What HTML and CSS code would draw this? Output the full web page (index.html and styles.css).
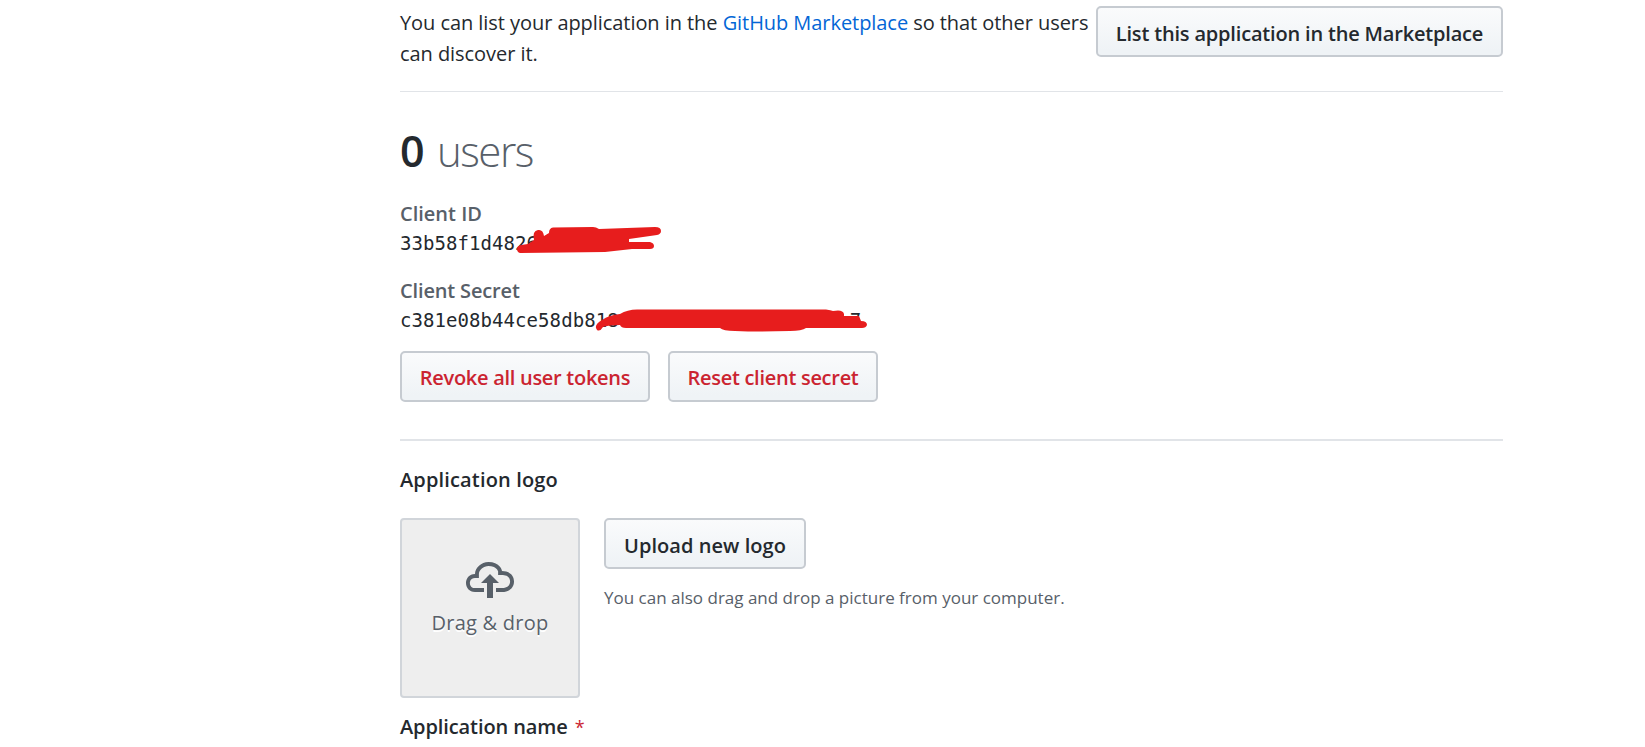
FILE: index.html
```html
<!DOCTYPE html>
<html lang="en">
<head>
<meta charset="utf-8">
<title>Application settings</title>
<link rel="stylesheet" href="styles.css">
</head>
<body>
<main class="settings">
  <section class="marketplace">
    <p class="marketplace-text"><span>You can list your application in the <a class="link" href="#">GitHub Marketplace</a> so that other users</span><br><span>can discover it.</span></p>
    <button class="btn btn-list">List this application in the Marketplace</button>
  </section>
  <section class="keys">
    <h2 class="users"><strong class="users-count">0</strong><span class="users-label">users</span></h2>
    <dl class="key-list">
      <dt class="key-label label-id">Client ID</dt>
      <dd class="key-value">33b58f1d4826
        <svg class="scribble scribble-id" width="150" height="32" viewBox="515 224 150 32"><path d="M517 249Q517 246 521 245L528 244L534 240Q532 231 538 230Q543 229 544 236L549 233Q549 228 553 227.500L593 227Q596 227 599 229L655 227Q661 227 661 231Q661 234 657 235L629 239L629 242L650 242Q654 243 654 246Q654 249 650 249L632 249L605 252L520 253Q517 252 517 249Z"/></svg>
      </dd>
      <dt class="key-label label-secret">Client Secret</dt>
      <dd class="key-value">c381e08b44ce58db818<span class="key-tail">7</span>
        <svg class="scribble scribble-secret" width="276" height="28" viewBox="593 306 276 28"><path d="M596 328Q595 324 602 320Q609 315 620 314Q628 309 639 309.500L826 309.500Q831 310 833 311Q843 309 844 314L844 316L859 316L861 321Q867 321 867 325Q866 328 862 328L806 328Q802 331 790 331Q760 332 735 331Q723 331 720 328L626 328Q621 328 620 325Q608 325 603 327Q600 332 597 330Z"/></svg>
      </dd>
    </dl>
    <div class="actions">
      <button class="btn btn-danger btn-revoke">Revoke all user tokens</button>
      <button class="btn btn-danger btn-reset">Reset client secret</button>
    </div>
  </section>
  <section class="logo">
    <h3 class="field-title title-logo">Application logo</h3>
    <div class="logo-row">
      <div class="dropzone">
        <svg class="cloud" width="48" height="36" viewBox="0 2 16 12"><path d="M7 9H5l3-3 3 3H9v5H7V9zm5-4c0-.44-.91-3-4.5-3C5.080 2 3 3.920 3 6 1.020 6 0 7.520 0 9c0 1.530 1 3 3 3h3v-1.300H3c-1.620 0-1.700-1.420-1.700-1.700 0-.17.050-1.700 1.700-1.700h1.300V6c0-1.390 1.560-2.700 3.200-2.700 2.550 0 3.130 1.550 3.200 1.800v1.200H12c.81 0 2.700.22 2.700 2.200 0 2.090-2.250 2.200-2.700 2.200h-2V12h2c2.080 0 4-1.160 4-3.500C16 6.060 14.080 5 12 5z"/></svg>
        <span class="drop-text">Drag &amp; drop</span>
      </div>
      <div class="upload">
        <button class="btn btn-upload">Upload new logo</button>
        <p class="note">You can also drag and drop a picture from your computer.</p>
      </div>
    </div>
    <h3 class="field-title title-name">Application name<span class="required">*</span></h3>
  </section>
</main>
</body>
</html>
```
FILE: styles.css
```css
* { box-sizing: border-box; }
body {
  margin: 0;
  background: #fff;
  color: #24292e;
  font: 20px/31px "Open Sans", "Noto Sans", sans-serif;
  overflow: hidden;
}
h2, h3, p, dl, dd { margin: 0; }
.settings { width: 1103px; margin-left: 400px; }
.marketplace {
  display: flex;
  justify-content: space-between;
  align-items: flex-start;
  height: 92px;
  padding-top: 6px;
  border-bottom: 1px solid #e1e4e8;
}
.marketplace-text { white-space: nowrap; padding-top: 1px; letter-spacing: -0.06px; }
.link { color: #0366d6; text-decoration: none; }
.btn {
  height: 51px;
  padding: 4px 0 0;
  border: 2px solid #c6cbd1;
  border-radius: 5px;
  background: linear-gradient(#fafbfc, #eff3f6 90%);
  color: #24292e;
  font: 600 20px/30px "Open Sans", "Noto Sans", sans-serif;
  letter-spacing: -0.18px;
  white-space: nowrap;
}
.btn-list { width: 407px; }
.btn-danger { padding-top: 3px; color: #cb2431; }
.btn-revoke { width: 250px; letter-spacing: -0.28px; }
.btn-reset { width: 210px; letter-spacing: -0.28px; }
.btn-upload { width: 202px; letter-spacing: 0.05px; }
.keys { height: 349px; padding-top: 27px; border-bottom: 2px solid #e1e4e8; }
.users { display: flex; height: 64px; font-size: 43px; line-height: 64px; font-weight: 300; }
.users-count { width: 37px; font-weight: 600; }
.users-label { color: #586069; font-size: 42px; letter-spacing: -1.5px; }
.key-list { padding-top: 15px; }
.key-label { height: 31px; color: #586069; font-weight: 600; }
.label-secret { letter-spacing: -0.15px; }
.key-value {
  position: relative;
  height: 46px;
  font: 19px/29px "DejaVu Sans Mono", monospace;
  letter-spacing: 0.07px;
  white-space: nowrap;
}
.key-tail { padding-left: 231px; }
.scribble { position: absolute; fill: #e71d1d; }
.scribble-id { left: 115px; top: -5px; }
.scribble-secret { left: 193px; top: 0; }
.actions { display: flex; gap: 18px; margin-top: -1px; }
.logo { padding-top: 23px; }
.field-title { font-size: 20px; font-weight: 600; line-height: 31px; letter-spacing: 0.15px; }
.logo-row { display: flex; gap: 24px; padding-top: 23px; }
.dropzone {
  display: flex;
  flex-direction: column;
  align-items: center;
  width: 180px;
  height: 180px;
  padding-top: 42px;
  border: 2px solid #d1d5da;
  border-radius: 4px;
  background: #eee;
  color: #586069;
  text-shadow: 0 2px 0 #fff;
}
.cloud { fill: #586069; }
.drop-text { margin-top: 9px; letter-spacing: 0.25px; }
.note { padding-top: 13px; color: #586069; font-size: 17px; white-space: nowrap; }
.title-name { margin-top: 13px; letter-spacing: -0.1px; }
.required { margin-left: 7px; color: #cb2431; font-size: 18px; font-weight: 400; }
```
